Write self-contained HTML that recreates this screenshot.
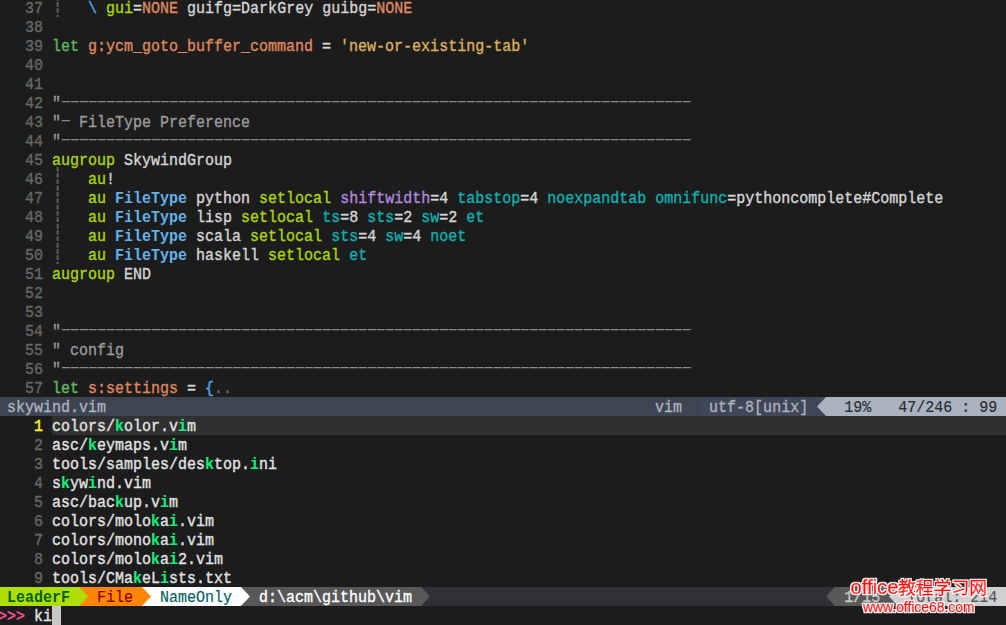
<!DOCTYPE html>
<html>
<head>
<meta charset="utf-8">
<title>skywind.vim - LeaderF</title>
<style>
html,body{margin:0;padding:0;background:#1c1c1c;}
body{width:1006px;height:625px;overflow:hidden;position:relative;}
#scr{position:absolute;left:-2px;top:-2px;width:1008px;height:627px;background:#1c1c1c;overflow:hidden;
  font-family:"Liberation Mono","DejaVu Sans Mono",monospace;font-size:15px;color:#d4d4d4;}
#txt{position:absolute;left:0;top:0;width:1008px;height:627px;}
.r{position:absolute;left:0;width:1008px;height:19px;white-space:pre;}
.r>div{position:absolute;left:0;top:0;width:1008px;height:19px;line-height:19px;transform:translateY(2.5px) scaleY(1.15);transform-origin:0 13.5px;-webkit-text-stroke:0.35px;}
.b{position:absolute;height:19px;display:block;}
.n{color:#666666;}
.igw{position:absolute;left:54px;width:10px;overflow:hidden;}
.ig{position:absolute;left:0.6px;top:-1.2px;width:10px;font:16.25px/19px "DejaVu Sans Mono",monospace;color:#62666a;white-space:pre;transform:scaleX(1.4);transform-origin:4.9px 0;}
.ds{position:absolute;left:59.1px;top:0;height:19px;line-height:19px;font-size:29.3px;letter-spacing:-8.583px;color:#8a8a8a;transform:translateY(-4.0px) scaleY(0.5);transform-origin:0 17.3px;}
.c{color:#9a9a9a;}
.kw{color:#5fb75f;}
.id{color:#df875f;}
.st{color:#dcb05f;}
.yg{color:#a9d40e;}
.ft{color:#62b2ea;font-weight:bold;-webkit-text-stroke:0;}
.pu{color:#af87df;}
.tl{color:#10afaf;}
.bs{color:#5aa8f0;}
.br{color:#5aa8f0;}
.dd{color:#6a6a6a;}
.w{color:#d4d4d4;}
.m{color:#12ee7c;font-weight:bold;-webkit-text-stroke:0.1px;}
.lw{color:#e2e2e2;}
.cn{color:#f6f02c;-webkit-text-stroke:0.5px;}
.sl{color:#abb2bf;}
.sr{color:#282c34;-webkit-text-stroke:0.15px;}
.s1{color:#005f00;font-weight:bold;-webkit-text-stroke:0;}
.s2{color:#870000;-webkit-text-stroke:0.15px;}
.s3{color:#005f5f;-webkit-text-stroke:0.15px;}
.s4{color:#ffffff;}
.s5{color:#c9c9c9;}
.s6{color:#545454;-webkit-text-stroke:0.15px;}
.pr{color:#f8559a;}
b{font-weight:bold;}
</style>
</head>
<body>
<div id="scr">
<div id="bgs">
<div class="b" style="left:0;top:399px;width:1008px;background:#3e4452"></div>
<div class="b" style="left:702px;top:399px;width:126px;background:#404657"></div>
<svg class="b" style="left:819px;top:399px" width="9" height="19" viewBox="0 0 9 19"><path d="M9 0L0 9.5L9 19Z" fill="#abb2bf"/></svg>
<div class="b" style="left:828px;top:399px;width:180px;background:#abb2bf"></div>
<div class="b" style="left:54px;top:418px;width:954px;background:#303030"></div>
<div class="b" style="left:0;top:589px;width:1008px;background:#303136"></div>
<div class="b" style="left:0;top:589px;width:81px;background:#afdf00"></div>
<div class="b" style="left:81px;top:589px;width:72px;background:#ff8700"></div>
<svg class="b" style="left:81px;top:589px" width="9" height="19" viewBox="0 0 9 19"><path d="M0 0L9 9.5L0 19Z" fill="#afdf00"/></svg>
<div class="b" style="left:144px;top:589px;width:108px;background:#ffffff"></div>
<svg class="b" style="left:144px;top:589px" width="9" height="19" viewBox="0 0 9 19"><path d="M0 0L9 9.5L0 19Z" fill="#ff8700"/></svg>
<div class="b" style="left:243px;top:589px;width:180px;background:#585858"></div>
<svg class="b" style="left:243px;top:589px" width="9" height="19" viewBox="0 0 9 19"><path d="M0 0L9 9.5L0 19Z" fill="#ffffff"/></svg>
<svg class="b" style="left:423px;top:589px" width="9" height="19" viewBox="0 0 9 19"><path d="M0 0L9 9.5L0 19Z" fill="#585858"/></svg>
<svg class="b" style="left:828px;top:589px" width="9" height="19" viewBox="0 0 9 19"><path d="M9 0L0 9.5L9 19Z" fill="#585858"/></svg>
<div class="b" style="left:837px;top:589px;width:63px;background:#585858"></div>
<svg class="b" style="left:891px;top:589px" width="9" height="19" viewBox="0 0 9 19"><path d="M9 0L0 9.5L9 19Z" fill="#d0d0d0"/></svg>
<div class="b" style="left:900px;top:589px;width:108px;background:#d0d0d0"></div>
<div class="b" style="left:54px;top:608px;width:9px;background:#c8c8c8"></div>
</div>
<div id="txt">
<div class="igw" style="top:-2px;height:21px"><div class="ig">┆
┆</div></div>
<div class="igw" style="top:169px;height:97px"><div class="ig">┆
┆
┆
┆
┆
┆</div></div>
<div class="r" style="top:0px"><div><span class="n">   37 </span>    <span class="bs">\</span> <span class="yg">gui</span>=<span class="id">NONE</span> guifg=DarkGrey guibg=<span class="id">NONE</span></div></div>
<div class="r" style="top:19px"><div><span class="n">   38 </span></div></div>
<div class="r" style="top:38px"><div><span class="n">   39 </span><span class="kw">let</span> <span class="id">g:ycm_goto_buffer_command</span> = <span class="st">'new-or-existing-tab'</span></div></div>
<div class="r" style="top:57px"><div><span class="n">   40 </span></div></div>
<div class="r" style="top:76px"><div><span class="n">   41 </span></div></div>
<div class="r" style="top:95px"><div><span class="n">   42 </span><span class="c">"</span></div><span class="ds">----------------------------------------------------------------------</span></div>
<div class="r" style="top:114px"><div><span class="n">   43 </span><span class="c">"  FileType Preference</span></div><span class="ds">-</span></div>
<div class="r" style="top:133px"><div><span class="n">   44 </span><span class="c">"</span></div><span class="ds">----------------------------------------------------------------------</span></div>
<div class="r" style="top:152px"><div><span class="n">   45 </span><span class="yg">augroup</span> SkywindGroup</div></div>
<div class="r" style="top:171px"><div><span class="n">   46 </span>    <span class="yg">au</span>!</div></div>
<div class="r" style="top:190px"><div><span class="n">   47 </span>    <span class="yg">au</span> <span class="ft">FileType</span> python <span class="yg">setlocal</span> <span class="pu">shiftwidth</span>=4 <span class="tl">tabstop</span>=4 <span class="tl">noexpandtab</span> <span class="tl">omnifunc</span>=pythoncomplete#Complete</div></div>
<div class="r" style="top:209px"><div><span class="n">   48 </span>    <span class="yg">au</span> <span class="ft">FileType</span> lisp <span class="yg">setlocal</span> <span class="tl">ts</span>=8 <span class="tl">sts</span>=2 <span class="tl">sw</span>=2 <span class="tl">et</span></div></div>
<div class="r" style="top:228px"><div><span class="n">   49 </span>    <span class="yg">au</span> <span class="ft">FileType</span> scala <span class="yg">setlocal</span> <span class="tl">sts</span>=4 <span class="tl">sw</span>=4 <span class="tl">noet</span></div></div>
<div class="r" style="top:247px"><div><span class="n">   50 </span>    <span class="yg">au</span> <span class="ft">FileType</span> haskell <span class="yg">setlocal</span> <span class="tl">et</span></div></div>
<div class="r" style="top:266px"><div><span class="n">   51 </span><span class="yg">augroup</span> END</div></div>
<div class="r" style="top:285px"><div><span class="n">   52 </span></div></div>
<div class="r" style="top:304px"><div><span class="n">   53 </span></div></div>
<div class="r" style="top:323px"><div><span class="n">   54 </span><span class="c">"</span></div><span class="ds">----------------------------------------------------------------------</span></div>
<div class="r" style="top:342px"><div><span class="n">   55 </span><span class="c">" config</span></div></div>
<div class="r" style="top:361px"><div><span class="n">   56 </span><span class="c">"</span></div><span class="ds">----------------------------------------------------------------------</span></div>
<div class="r" style="top:380px"><div><span class="n">   57 </span><span class="kw">let</span> <span class="id">s:settings</span> = <span class="br">{</span><span class="dd">..</span></div></div>
<div class="r" style="top:399px"><div><span class="sl"> skywind.vim                                                             vim   utf-8[unix]  </span><span class="sr">  19%   47/246 : 99 </span></div></div>
<div class="r" style="top:418px"><div><span class="cn">    1 </span><span class="lw">colors/<b class="m">k</b>olor.v<b class="m">i</b>m</span></div></div>
<div class="r" style="top:437px"><div><span class="n">    2 </span><span class="lw">asc/<b class="m">k</b>eymaps.v<b class="m">i</b>m</span></div></div>
<div class="r" style="top:456px"><div><span class="n">    3 </span><span class="lw">tools/samples/des<b class="m">k</b>top.<b class="m">i</b>ni</span></div></div>
<div class="r" style="top:475px"><div><span class="n">    4 </span><span class="lw">s<b class="m">k</b>yw<b class="m">i</b>nd.vim</span></div></div>
<div class="r" style="top:494px"><div><span class="n">    5 </span><span class="lw">asc/bac<b class="m">k</b>up.v<b class="m">i</b>m</span></div></div>
<div class="r" style="top:513px"><div><span class="n">    6 </span><span class="lw">colors/molo<b class="m">k</b>a<b class="m">i</b>.vim</span></div></div>
<div class="r" style="top:532px"><div><span class="n">    7 </span><span class="lw">colors/mono<b class="m">k</b>a<b class="m">i</b>.vim</span></div></div>
<div class="r" style="top:551px"><div><span class="n">    8 </span><span class="lw">colors/molo<b class="m">k</b>a<b class="m">i</b>2.vim</span></div></div>
<div class="r" style="top:570px"><div><span class="n">    9 </span><span class="lw">tools/CMa<b class="m">k</b>eL<b class="m">i</b>sts.txt</span></div></div>
<div class="r" style="top:589px"><div><span class="s1"> LeaderF </span> <span class="s2"> File </span> <span class="s3"> NameOnly </span> <span class="s4"> d:\acm\github\vim </span>                                              <span class="s5"> 1/15 </span> <span class="s6"> Total: 214 </span></div></div>
<div class="r" style="top:608px"><div><span class="pr">&gt;&gt;&gt;</span> <span class="lw">ki</span></div></div>
</div>
<svg id="wm" style="position:absolute;left:840px;top:570px;overflow:visible" width="168" height="57" viewBox="0 0 168 57">
<defs><filter id="ol" x="-5%" y="-20%" width="110%" height="140%"><feMorphology in="SourceAlpha" operator="dilate" radius="1" result="d"/><feFlood flood-color="#ffffff"/><feComposite in2="d" operator="in" result="w"/><feMerge><feMergeNode in="w"/><feMergeNode in="SourceGraphic"/></feMerge></filter></defs>
<g filter="url(#ol)" fill="#ff0a0a" stroke="#ff0a0a" stroke-width="0.6">
<text x="12.5" y="26" font-family="'Liberation Sans',sans-serif" font-size="19.5" textLength="48" lengthAdjust="spacingAndGlyphs">office</text>
<text x="60" y="26" font-family="'Noto Sans CJK SC','Liberation Sans',sans-serif" font-size="17.5" textLength="89" lengthAdjust="spacingAndGlyphs">教程学习网</text>
<text x="25" y="43.7" font-family="'Liberation Sans',sans-serif" font-size="14" textLength="111.5" lengthAdjust="spacingAndGlyphs">www.office68.com</text>
</g>
</svg>
</div>
</body>
</html>
